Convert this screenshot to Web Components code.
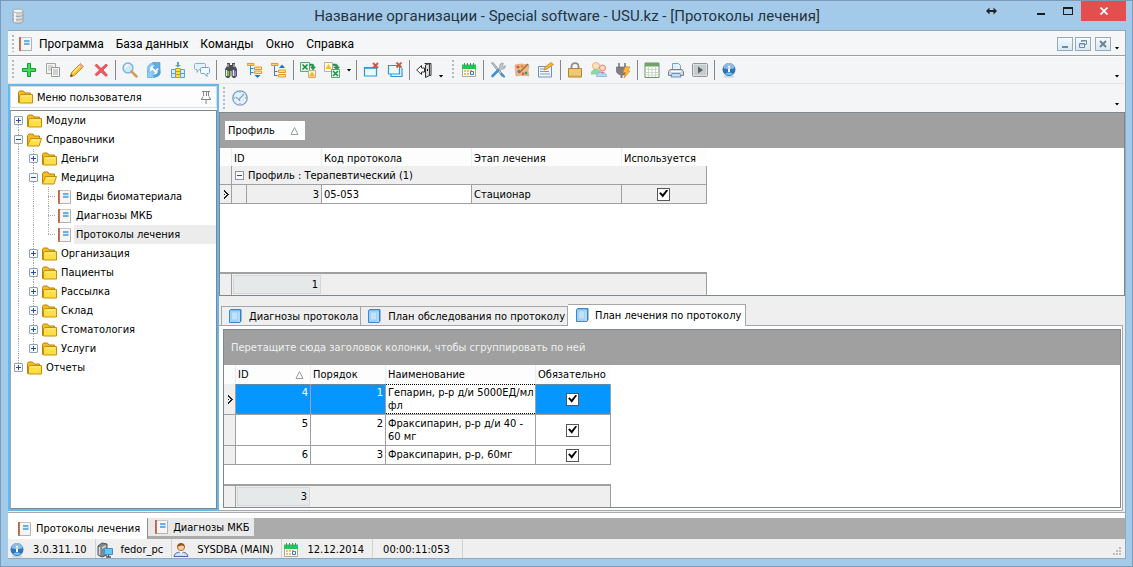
<!DOCTYPE html>
<html lang="ru">
<head>
<meta charset="utf-8">
<title>Протоколы лечения</title>
<style>
html, body { margin: 0; }
body {
  font-family: "DejaVu Sans Condensed", "Noto Sans", sans-serif;
  font-size: 11px;
  line-height: 13px;
  color: #000;
}
</style>
</head>
<body>
<app-window></app-window>
<script>
const ICONS = {
  db: `<path d="M3 3v10c0 3 10 3 10 0V3z" fill="#d9d9d6" stroke="#9aa1a5"/><ellipse cx="8" cy="3" rx="5" ry="2" fill="#f4f4f2" stroke="#a8aeb1"/><path d="M3 6.500c0 2.500 10 2.500 10 0M3 10c0 2.500 10 2.500 10 0" fill="none" stroke="#9aa1a5"/><path d="M5 5v9" stroke="#fff" stroke-width="1.500"/>`,
  page: `<path d="M3.500 1.500h11v13h-11z" fill="#f5f5f5" stroke="#c6c6c6"/><path d="M2 1h2v14H2z" fill="#cf7350"/><path d="M2.500 2v12" stroke="#8d5f4d" stroke-dasharray="1 1"/><path d="M7 4h5.500v5H7z" fill="#6bb0e6"/><path d="M7 6.500h5.500" stroke="#d9ecfb"/><path d="M14.500 2v12.500H4" stroke="#b2b4b6"/>`,
  folder: `<path d="M1.500 3.500l1-1.500h4l1.500 2h5.500v9.500h-12z" fill="#f5bd23" stroke="#bd8305"/><path d="M2.500 13.500V6.500l1.500-1h11.500v8.500h-13z" fill="#ffdf45" stroke="#c98f08"/><path d="M4 7h10" stroke="#fff2a0"/>`,
  open: `<path d="M1.500 13.500v-10L3 2h4l1 2h5.500v3" fill="#f5bd23" stroke="#bd8305"/><path d="M1.500 14L4.500 6.500h11L13 14z" fill="#ffe04a" stroke="#c98f08"/><path d="M5.500 8h8.500" stroke="#fff3a6"/>`,
  plus: `<path d="M6.500 1.500h3v5h5v3h-5v5h-3v-5h-5v-3h5z" fill="#3ddc5c" stroke="#119d38"/>`,
  copy: `<path d="M1.500 1.500h9v10h-9z" fill="#f4f4f2" stroke="#a3a5a2"/><path d="M3 4h5M3 6h3M3 8h3" stroke="#b5b7b4"/><path d="M6.500 5.500h8v9h-8z" fill="#f7f7f5" stroke="#969895"/><path d="M8 8h5M8 10h5M8 12h5" stroke="#a9aba8"/>`,
  pencil: `<path d="M1.500 14.500l1-4 9-9 3 3-9 9z" fill="#fbc02c" stroke="#c78a2c"/><path d="M4 11l8-8" stroke="#ffe98c" stroke-width="1.500"/><path d="M11.500 1.500l3 3-1.500 1.500-3-3z" fill="#f0a794"/><path d="M1 15l1-3 2 2z" fill="#4a4a4a"/>`,
  cross: `<path d="M2 3.500L3.500 2 8 6.500 13 2l1.500 1.500L10 8l4.500 5-1.500 1.500L8 10l-4.500 4L2 12.500 6.500 8z" fill="#f05a5e" stroke="#cf2d35" stroke-width=".6"/>`,
  search: `<circle cx="6" cy="6" r="5" fill="#cfe9fb" stroke="#76b4e4" stroke-width="1.400"/><path d="M3.500 6a3 3 0 0 1 3-3" stroke="#fff" stroke-width="1.500" fill="none"/><path d="M9.500 9.500l5 5" stroke="#d69a58" stroke-width="2.500" stroke-linecap="round"/>`,
  refresh: `<path d="M3 9.500c-2-4 1-8 5-7.500h1" stroke="#86c5f0" stroke-width="3"/><path d="M6.500 .500H14v7l-2.500-2-2 2-2.500-2 2-2z" fill="#5fb0e8" stroke="#3f93d0" stroke-width=".6"/><path d="M13 7.500c1 4-1 6.500-5 6.500H7" stroke="#4ba0dd" stroke-width="3"/><path d="M9 15.500H1.500v-7L4 10.500l2-2 2.500 2-2 2z" fill="#8fcdf4" stroke="#4b9dd6" stroke-width=".6"/>`,
  insert: `<path d="M5.500 6.500h5v9h-5z" fill="#ffd94f" stroke="#d69a12"/><path d="M5.500 9.500h5M5.500 12.500h5" stroke="#d69a12"/><path d="M1.500 7.500h4v8h-4zM10.500 7.500h4v8h-4z" fill="#d8ecf9" stroke="#5ea4cf"/><path d="M1.500 11.500h4M10.500 11.500h4" stroke="#5ea4cf"/><path d="M8 5.500L5 3h2V0h2v3h2z" fill="#5b9fcd"/>`,
  chat: `<path d="M1.500 1.500h9c1 0 1 1 1 1v4c0 1-1 1-1 1H5l-2 3v-3H1.500c-1 0-1-1-1-1v-4c0-1 1-1 1-1z" fill="#e5f2fb" stroke="#7fb3d8"/><path d="M7.500 5.500h7c1 0 1 1 1 1v4c0 1-1 1-1 1H13v3l-2.500-3h-3c-1 0-1-1-1-1v-4c0-1 1-1 1-1z" fill="#f2f8fd" stroke="#6ea5ce"/>`,
  binoc: `<path d="M4 1h3v2h2V1h3v3l2 3v7l-2 2h-2l-1.500-2V9h-1v5L6 16H4l-2-2V7l2-3z" fill="#4c5054"/><path d="M3.500 8v6M10.500 8v6" stroke="#e4e6e8" stroke-width="1.500"/><path d="M5.300 9v5" stroke="#74d02e" stroke-width="1.700"/><path d="M12.300 9v5" stroke="#8f7fd8" stroke-width="1.700"/><path d="M5 2v3M11 2v3" stroke="#d5d8da"/>`,
  treedown: `<path d="M0 1.500h7v2H0z" fill="#ffcf6b" stroke="#e59a27"/><path d="M3.500 4v9M3.500 6.500h3M3.500 10.500h3" stroke="#2d86d0"/><path d="M7.500 5h7v2.500h-7zM7.500 9h7v2.500h-7z" fill="#ffe3a0" stroke="#e59a27"/><path d="M7.500 13h6l-3 3z" fill="#1d72c6"/>`,
  treeup: `<path d="M0 1.500h7v2H0z" fill="#ffcf6b" stroke="#e59a27"/><path d="M3.500 4v10M3.500 9.500h3M3.500 13.500h3" stroke="#2d86d0"/><path d="M7.500 8h7v2.500h-7zM7.500 12.500h7v2.500h-7z" fill="#ffe3a0" stroke="#e59a27"/><path d="M8 6h6l-3-3.500z" fill="#1d72c6"/>`,
  xlsout: `<path d="M.500 .500h9v9h-9z" fill="#e5f6e9" stroke="#56a871"/><path d="M2.500 2.500l5 5M7.500 2.500l-5 5" stroke="#208a47" stroke-width="1.600"/><path d="M10 2h2c2 0 2 1 2 3h1.500L13 8 10.500 5H12c0-1 0-1.500-2-1.500z" fill="#299a52" stroke="#187a3b" stroke-width=".5"/><path d="M8.500 8.500h7v7h-7z" fill="#fff5da" stroke="#c9ad77"/><path d="M12 9.500l3 5H9z" fill="#f3b02b"/>`,
  xlsin: `<path d="M.500 .500h8v9h-8z" fill="#fff8e6" stroke="#b9b2a4"/><path d="M4.500 2l3 5h-6z" fill="#f3c02b"/><path d="M9 2h2c2 0 3 1 3 3h1.500L13 8 9.500 5H12c0-1-1-1.500-3-1.500z" fill="#299a52" stroke="#187a3b" stroke-width=".5"/><path d="M7.500 7.500h8v8h-8z" fill="#e5f6e9" stroke="#56a871"/><path d="M9 9l5 5M14 9l-5 5" stroke="#208a47" stroke-width="1.500"/>`,
  winclose: `<path d="M1.500 5.500h12v8.500h-12z" fill="#eef8fe" stroke="#259bd8" stroke-width="1.200"/><path d="M2 6h11" stroke="#259bd8" stroke-width="1.500"/><path d="M10 1l5 5M15 1l-5 5" stroke="#d1553f" stroke-width="1.800"/>`,
  winsclose: `<path d="M4 12v2.500h11V6" fill="none" stroke="#259bd8" stroke-width="1.200"/><path d="M1.500 3.500h11V12h-11z" fill="#eef8fe" stroke="#259bd8" stroke-width="1.200"/><path d="M9.500 .500l5 5M14.500 .500l-5 5" stroke="#d1553f" stroke-width="1.800"/>`,
  door: `<path d="M8.500 1.500h6.500v12h-6" fill="#fff" stroke="#333"/><path d="M9.500 3l4-1.500v12l-4 2z" fill="#dcdcdc" stroke="#333"/><path d="M5.500 3.500V6h3v4h-3v2.500L.700 8z" fill="#fff" stroke="#333"/><path d="M11.500 7v2" stroke="#111"/>`,
  calendar: `<path d="M1.500 4.500h13v10h-13z" fill="#fdfdf7" stroke="#a9aaa2"/><path d="M1 2.500h14v4.500H1z" fill="#22c45c"/><path d="M3.500 1v3M6.500 1v3M9.500 1v3M12.500 1v3" stroke="#5f8a66"/><path d="M3 8h2v2H3zM6 8h2v2H6zM9 8h2v2H9zM3 11h2v2H3zM6 11h2v2H6z" fill="#f0bf6e"/><path d="M9.500 9.500h3v3h-3z" fill="#fff" stroke="#2c7ecb"/>`,
  tools: `<path d="M1.500 1L3 .500 13.500 13l-1.500 1.500z" fill="#c5cacf" stroke="#7f878e" stroke-width=".7"/><path d="M11 1.500c2-1 3 0 2 1l-1 1.500 1.500 1L15 3.500c1 1.500-.500 4-3 3.500L10 8.500 8.500 7l1.300-2c-.300-1.500.200-2.900 1.200-3.500z" fill="#c3c9ce" stroke="#7f878e" stroke-width=".6"/><path d="M8 8.500L2.500 14" stroke="#3c93d6" stroke-width="2.600" stroke-linecap="round"/><path d="M11.500 12l2.500 2.500" stroke="#3c93d6" stroke-width="2.200" stroke-linecap="round"/>`,
  palette: `<path d="M1 3l6-1 8 1-1 6 1 5-6-1-7 1-.500-6z" fill="#f3b982" stroke="#cf9b76" stroke-width=".6"/><circle cx="4" cy="5" r="1.600" fill="#d9583b"/><circle cx="8" cy="4.500" r="1.400" fill="#e8893a"/><circle cx="5" cy="9.500" r="1.700" fill="#4f85c9"/><circle cx="12" cy="11" r="1.500" fill="#39a267"/><circle cx="9" cy="12" r="1.400" fill="#e2574e"/><path d="M5 11l9-9" stroke="#9b6b46" stroke-width="1.500"/>`,
  note: `<path d="M.500 4.500h13v10.500H.500z" fill="#f2f6fd" stroke="#6d8fc6"/><path d="M2 7h6M2 9.500h9M2 12h10" stroke="#8197bb"/><path d="M6 8l1-3 6-4.500 2.500 2L9 7z" fill="#f7b733" stroke="#c07f25" stroke-width=".7"/>`,
  lock: `<path d="M4.500 8V4.500c0-4.500 7-4.500 7 0V8" fill="none" stroke="#8d8f91" stroke-width="1.800"/><path d="M1.500 6.500h13v8.500h-13z" fill="#e8bd62" stroke="#b08433"/><path d="M2 8h12M2 10h12M2 12h12" stroke="#f6dc98" stroke-width=".8"/>`,
  users: `<circle cx="5" cy="4" r="3.500" fill="#fde3c4" stroke="#eeb06e"/><path d="M0 12c0-6 10-6 10 0z" fill="#8fdba8" stroke="#6bbf86" stroke-width=".6"/><circle cx="11.500" cy="6" r="3" fill="#fbd9c4" stroke="#ef8273"/><path d="M5.500 14.500c0-6 10-6 10 0z" fill="#b4d6fa" stroke="#6a9fdd" stroke-width=".6"/><path d="M9.500 10l2 2 2-2" fill="#e9776f"/>`,
  plug: `<path d="M4 1v4M10 1v4" stroke="#88898b" stroke-width="1.800"/><path d="M1.500 5h11v4c0 3-3 4-5 4s-6-1-6-4z" fill="#7d7f82" stroke="#5c5e61" stroke-width=".6"/><path d="M6.500 13v3" stroke="#77797c" stroke-width="2"/><path d="M10 5h5l-2.500 4H15l-6 7 1.500-5.500H8z" fill="#ffc033" stroke="#de7d1f" stroke-width=".7"/>`,
  table: `<path d="M1 1h14v14.500H1z" fill="#fff" stroke="#6c8c6b"/><path d="M1 1h14v3.500H1z" fill="#6ca567"/><path d="M1 7.500h14M1 10.500h14M1 13h14M4.500 5v10M8 5v10M11.500 5v10" stroke="#c0d1bf" stroke-width=".8"/>`,
  printer: `<path d="M4.500 1.500h6l2 2V8h-8z" fill="#e6f1fb" stroke="#6fa2d0"/><path d="M2 7.500h12l1.500 2v4H.500v-4z" fill="#d4d7da" stroke="#7d8287"/><path d="M4 11.500h8l1 3.500H3z" fill="#c7e1f8" stroke="#6793bb"/><path d="M3 9.500h10" stroke="#fff"/>`,
  play: `<rect x=".500" y="1.500" width="15" height="13" rx="1" fill="#dfe2e3" stroke="#8f9598"/><path d="M2 3h12v10H2z" fill="#c6cccd"/><path d="M6 4.500v7L11 8z" fill="#59605f"/>`,
  info: `<ellipse cx="8" cy="14.500" rx="5.500" ry="1.200" fill="#cfd4d8"/><circle cx="8" cy="7.500" r="6.500" fill="#2f74bb"/><path d="M2.500 6a5.500 5 0 0 1 11 0c-2.500 1.500-8.500 1.500-11 0z" fill="#8fbce6"/><path d="M4 11.500a5 4 0 0 0 8 0c-3-1.500-5-1.500-8 0z" fill="#74c6f4"/><path d="M8 4v1.600M8 6.600v3.400" stroke="#fff" stroke-width="2"/>`,
  clock: `<circle cx="8" cy="8" r="7.200" fill="#e3f1fb" stroke="#7d9dbf" stroke-width="1.300"/><path d="M3.500 7L7 9.500l5-5.500" fill="none" stroke="#7fa9d3" stroke-width="1.300"/><path d="M8 2v1M8 13v1M2 8h1M13 8h1" stroke="#6d97c4"/><path d="M7 9.500l1 1.500" stroke="#d35b4a"/>`,
  book: `<path d="M2.500 2.500l1.500-1h10v11.500l-1 1.500H2.500z" fill="#7fbcec" stroke="#3f86c4"/><path d="M3 3h8.500v11H3z" fill="#9fd0f5"/><path d="M5 4.500h5v7H5z" fill="#c3e2fa"/><path d="M12 3.500v10.500" stroke="#e8f3fb"/><path d="M13.500 2.500v10.500" stroke="#3a7fbc"/>`,
  pin: `<path d="M4 2.500h8M5.500 3v4M10.500 3v4M3 10.500h10M5 7.500L3.500 10M11 7.500l1.500 2.500M8 11v4M8.500 3v4" stroke="#80858a" fill="none"/>`,
  server: `<path d="M1 4l4-3 5 1v11l-5 2-4-2z" fill="#7f878c" stroke="#4f565a"/><path d="M2.500 5v8M5 6l4-2" stroke="#d3d8db" fill="none" stroke-width="1.500"/><path d="M7.500 6.500h8v6h-8z" fill="#5cc9f7" stroke="#4b8fbe"/><path d="M11.500 13v2M9 15h5" stroke="#51595e" stroke-width="1.500"/>`,
  user: `<path d="M1 14.500c0-6 14-6 14 0z" fill="#d3e0f6" stroke="#4a67a8"/><path d="M6 9l2 3 2.500-3z" fill="#fff"/><circle cx="8" cy="5" r="3.600" fill="#fbd0a0" stroke="#b96d2a"/><path d="M4.500 5C4 0 12 0 11.500 5 10 3 7 3 4.500 5z" fill="#8f521d"/>`
};

const define = (tag, css, html, setup) => {
  const tpl = document.createElement('template');
  tpl.innerHTML = `<style>:host,*{box-sizing:border-box}${css}</style>${html}`;
  customElements.define(tag, class extends HTMLElement {
    constructor() {
      super();
      this.attachShadow({ mode: 'open' }).append(tpl.content.cloneNode(true));
    }
    connectedCallback() { if (setup) setup.call(this, this.shadowRoot); }
  });
};

/* ---- small parts ---- */
define('ui-icon', `:host{display:block;flex:none;width:16px;height:16px}svg{display:block;width:100%;height:100%}`,
  `<svg viewBox="0 0 16 16" fill="none" aria-hidden="true"></svg>`,
  function (r) { r.querySelector('svg').innerHTML = ICONS[this.getAttribute('name')] || ''; });

define('bar-grip', `:host{display:block;flex:none;width:2px;align-self:stretch;margin:3px 3px 3px 4px;
  background:repeating-linear-gradient(#b7bac0 0 2px,transparent 2px 4px)}`, '');

define('bar-sep', `:host{display:block;flex:none;width:1px;height:20px;margin:0 2px;background:#85878a}`, '');

define('drop-arrow', `:host{display:block;flex:none;width:10px}
  :host([low]){padding-top:12px}
  button{display:block;width:10px;height:8px;padding:0;border:0;background:none}
  button::before{content:"";display:block;width:5px;height:3px;margin:0 auto;background:#000;clip-path:polygon(0 0,100% 0,50% 100%)}`,
  `<button type="button" aria-label="Ещё"></button>`);

define('tool-button', `:host{display:block;flex:none}
  button{display:grid;place-items:center;width:24px;height:24px;padding:0;border:0;background:none}`,
  `<button type="button"></button>`,
  function (r) {
    const b = r.querySelector('button');
    b.innerHTML = `<ui-icon name="${this.getAttribute('icon')}"></ui-icon>`;
    b.setAttribute('aria-label', this.getAttribute('label') || this.getAttribute('icon'));
  });

/* ---- title bar ---- */
define('title-bar', `:host{display:grid;grid-template-columns:1fr auto 1fr;height:29px;align-items:center}
  .ico{padding-left:2px}
  h1{margin:0;font:15px/20px Roboto,"Noto Sans",sans-serif;color:#26343f;white-space:nowrap}
  .btns{display:flex;justify-content:flex-end;align-self:start}
  button{display:grid;place-items:center;width:27px;height:20px;padding:0;border:0;background:none}
  .move{margin-right:22px}
  .close{width:45px;background:#e54e4e}
  svg{display:block}`,
  `<span class="ico"><ui-icon name="db"></ui-icon></span>
  <h1>Название организации - Special software - USU.kz - [Протоколы лечения]</h1>
  <div class="btns">
    <button class="move" type="button" aria-label="Переместить"><svg width="11" height="8"><path d="M0 4l3.500-3.500V3h4V.500L11 4 7.500 7.500V5h-4v2.500z" fill="#222"/></svg></button>
    <button type="button" aria-label="Свернуть"><svg width="10" height="8"><path d="M1 6h8v2H1z" fill="#1c1c1c"/></svg></button>
    <button type="button" aria-label="Развернуть"><svg width="10" height="8"><path d="M0 0h10v8H0zM1 2v5h8V2z" fill="#1c1c1c" fill-rule="evenodd"/></svg></button>
    <button class="close" type="button" aria-label="Закрыть"><svg width="8" height="8"><path d="M.500 .500l7 7M7.500 .500l-7 7" stroke="#fff" stroke-width="1.800"/></svg></button>
  </div>`);

/* ---- menu ---- */
define('menu-bar', `:host{display:flex;align-items:center;height:25px;padding:1px 3px 0 0;background:#f5f6f7;border-bottom:1px solid #9a9da1}
  nav{display:flex;gap:12px;flex:1;margin-left:6px}
  nav button{padding:0;border:0;background:none;font:12px/16px Roboto,"Noto Sans",sans-serif;color:#000}
  .mdi{display:flex;gap:2px}
  .mdi button{display:grid;place-items:center;width:16px;height:14px;padding:0;border:1px solid #98a9b8;background:linear-gradient(#f4f9fd,#d8e8f4)}
  .mdi button:last-child{margin-left:2px}
  svg{display:block}
  drop-arrow{align-self:stretch;margin-left:1px}`,
  `<bar-grip></bar-grip><ui-icon name="page"></ui-icon>
  <nav aria-label="Главное меню"><button>Программа</button><button>База данных</button><button>Команды</button><button>Окно</button><button>Справка</button></nav>
  <div class="mdi">
    <button aria-label="Свернуть окно"><svg width="8" height="8"><path d="M1 6h6v2H1z" fill="#6f8ba3"/></svg></button>
    <button aria-label="Восстановить окно"><svg width="8" height="8"><path d="M2.500 2V.500h5v4H6M2.500 1h5M.500 3.500h5v4h-5zM.500 4h5" fill="none" stroke="#6f8ba3"/></svg></button>
    <button aria-label="Закрыть окно"><svg width="8" height="8"><path d="M1 1l6 6M7 1L1 7" stroke="#6d8292" stroke-width="2"/></svg></button>
  </div><drop-arrow low></drop-arrow>`);

/* ---- main toolbar ---- */
define('tool-bar', `:host{display:flex;align-items:center;height:28px;padding:0 3px 0 0;background:#f4f5f7;border-top:1px solid #fdfdfd;border-bottom:1px solid #e2e4e7}
  .fill{flex:1}
  .g{margin-right:2px}`,
  `<bar-grip></bar-grip>` +
  'plus copy pencil cross | search refresh insert chat | binoc treedown treeup | xlsout xlsin v | winclose winsclose | door w # calendar | tools palette note | lock users plug | table printer play | info'
    .split(' ').map(n => n === '|' ? '<bar-sep></bar-sep>' : n === 'v' ? '<drop-arrow></drop-arrow>' : n === 'w' ? '<drop-arrow low></drop-arrow><span class="g"></span>' :
      n === '#' ? '<bar-grip></bar-grip>' : `<tool-button icon="${n}"></tool-button>`).join('') +
  `<span class="fill"></span><drop-arrow low></drop-arrow>`);

/* ---- user menu tree ---- */
define('tree-row', `:host{display:flex;align-items:center;height:19px}
  .c{flex:none;width:15px;height:19px;display:grid;place-items:center;
     background:repeating-linear-gradient(#a6a6a6 0 1px,transparent 1px 2px) 7px 0/1px 100% no-repeat}
  .c.first{background-position:7px 10px}
  .c.last{background-size:1px 9px}
  .c.h{background:repeating-linear-gradient(#a6a6a6 0 1px,transparent 1px 2px) 7px 0/1px 100% no-repeat,
     repeating-linear-gradient(90deg,#a6a6a6 0 1px,transparent 1px 2px) 7px 9px/8px 1px no-repeat}
  .c.h.last{background-size:1px 9px,8px 1px}
  button{width:9px;height:9px;padding:0;border:1px solid #8fa3b8;border-radius:1px;
    background:linear-gradient(#2f4f87,#2f4f87) 1px 3px/5px 1px no-repeat,#f5f7f9}
  button.plus{background:linear-gradient(#2f4f87,#2f4f87) 1px 3px/5px 1px no-repeat,linear-gradient(#2f4f87,#2f4f87) 3px 1px/1px 5px no-repeat,#f5f7f9}
  span.t{flex:1;margin-left:2px;padding-left:2px;line-height:19px;white-space:nowrap}
  :host([selected]) span.t{background:#ececec}`,
  `<span class="t"><slot></slot></span>`,
  function (r) {
    const t = r.querySelector('.t');
    const cells = this.getAttribute('cells').split('').map(k => ({
      l: '<i class="c"></i>',
      f: '<i class="c first"><button class="plus" aria-label="Развернуть"></button></i>',
      p: '<i class="c"><button class="plus" aria-label="Развернуть"></button></i>',
      P: '<i class="c last"><button class="plus" aria-label="Развернуть"></button></i>',
      m: '<i class="c"><button aria-label="Свернуть"></button></i>',
      h: '<i class="c h"></i>', H: '<i class="c h last"></i>'
    })[k]).join('');
    t.insertAdjacentHTML('beforebegin', cells + `<ui-icon name="${this.getAttribute('icon')}"></ui-icon>`);
  });

define('user-menu', `:host{display:flex;flex-direction:column;width:211px;flex:none;border:2px solid #66b7ea;background:#fff}
  header{display:flex;align-items:center;height:22px;margin-bottom:2px;padding:0 2px 0 6px;border:1px solid #dcdfe2;background:#fdfdfd}
  h2{margin:0 0 0 4px;flex:1;font:inherit}
  .tree{flex:1;border:1px solid #7f8790;border-left-color:#a0a6ac;background:#fff}`,
  `<header><ui-icon name="folder"></ui-icon><h2>Меню пользователя</h2><ui-icon name="pin"></ui-icon></header>
  <div class="tree">
    <tree-row cells="f" icon="folder">Модули</tree-row>
    <tree-row cells="m" icon="open">Справочники</tree-row>
    <tree-row cells="lp" icon="folder">Деньги</tree-row>
    <tree-row cells="lm" icon="open">Медицина</tree-row>
    <tree-row cells="llh" icon="page">Виды биоматериала</tree-row>
    <tree-row cells="llh" icon="page">Диагнозы МКБ</tree-row>
    <tree-row cells="llH" icon="page" selected>Протоколы лечения</tree-row>
    <tree-row cells="lp" icon="folder">Организация</tree-row>
    <tree-row cells="lp" icon="folder">Пациенты</tree-row>
    <tree-row cells="lp" icon="folder">Рассылка</tree-row>
    <tree-row cells="lp" icon="folder">Склад</tree-row>
    <tree-row cells="lp" icon="folder">Стоматология</tree-row>
    <tree-row cells="lP" icon="folder">Услуги</tree-row>
    <tree-row cells="P" icon="folder">Отчеты</tree-row>
  </div>`);

/* ---- data grids ---- */
const GRID_CSS = `
  :host{display:flex;flex-direction:column;border:1px solid #7f8790;background:#fff}
  .band{display:flex;align-items:center;flex:none;height:35px;background:#a0a0a0}
  table{border-collapse:separate;border-spacing:0;table-layout:fixed;flex:none}
  th,td{padding:0 2px;height:19px;font-weight:normal;text-align:left;white-space:nowrap;overflow:hidden}
  th{background:#fdfdfd;border-right:1px solid #e6eef6}
  th:last-child{border-right-color:#fdfdfd}
  td{border-right:1px solid #a0a0a0;border-bottom:1px solid #a0a0a0}
  td.n{text-align:right;padding-right:2px}
  td.ind,td.g{background:#efefef}
  td.ind{padding:0}
  td.chk{text-align:center;padding:0 1px 0 0}
  td svg{margin:0 auto}
  input{appearance:none;display:block;width:13px;height:13px;margin:0 auto;border:1px solid #555;background:#fff}
  input::before{content:"";display:block;width:9px;height:8px;margin:1px;background:#000;clip-path:polygon(0 45%,20% 35%,40% 60%,85% 0,100% 12%,42% 100%)}
  .fill{flex:1}
  .foot td{height:23px;background:#efefef;border-top:2px solid #a0a0a0;border-bottom:0}
  .foot td.sum{border-right:0;padding:1px}
  .sum span{display:block;height:19px;line-height:18px;border:1px solid #d5d8da;background:#e6e9ea;text-align:right;padding-right:2px}
  svg{display:block}
`;
const TRI = `<svg width="9" height="8" aria-hidden="true"><path d="M4.500 .500l3.500 7h-7z" fill="none" stroke="#9aa0a0"/></svg>`;
const MARK = `<svg width="6" height="9" aria-hidden="true"><path d="M1 0h1v1h1v1h1v1h1v1h1v1h-1v1h-1v1h-1v1h-1v1h-1V7h1V6h1V5h1V4h-1V3h-1V2h-1z" fill="#222"/><path d="M1 4h1v1h-1z" fill="#222"/></svg>`;

define('protocol-grid', GRID_CSS + `
  .chip{display:flex;align-items:center;justify-content:space-between;width:80px;height:19px;margin-left:5px;padding:0 6px 0 3px;border:0;background:#fdfdfd;font:inherit;color:#000}
  table{width:487px}
  thead th{height:18px}
  th{padding-top:2px}
  td.w{background:#fff}
  tr.grp div{display:flex;align-items:center;gap:4px;padding-left:1px}
  tr.grp button{width:9px;height:9px;padding:0;border:1px solid #8b93a0;background:linear-gradient(#34507f,#34507f) 1px 3px/5px 1px no-repeat,#fafafa}`,
  `<div class="band"><button class="chip" type="button">Профиль ${TRI}</button></div>
  <table>
    <colgroup><col style="width:12px"><col style="width:15px"><col style="width:75px"><col style="width:150px"><col style="width:150px"><col style="width:85px"></colgroup>
    <thead><tr><th></th><th colspan="2">ID</th><th>Код протокола</th><th>Этап лечения</th><th>Используется</th></tr></thead>
    <tbody>
      <tr class="grp"><td class="ind"></td><td class="g" colspan="5"><div><button type="button" aria-label="Свернуть группу"></button>Профиль : Терапевтический (1)</div></td></tr>
      <tr><td class="ind">${MARK}</td><td class="g"></td><td class="g n">3</td><td class="w">05-053</td><td class="g">Стационар</td><td class="g chk"><input type="checkbox" checked aria-label="Используется"></td></tr>
    </tbody>
  </table>
  <div class="fill"></div>
  <table class="foot">
    <colgroup><col style="width:12px"><col style="width:90px"><col style="width:385px"></colgroup>
    <tbody><tr><td class="ind"></td><td class="sum"><span>1</span></td><td></td></tr></tbody>
  </table>`);

define('plan-grid', GRID_CSS + `
  .band{padding-left:7px;color:#f0f0f0}
  table{width:387px}
  th div{display:flex;align-items:center;justify-content:space-between;padding-right:4px}
  td{line-height:13px;vertical-align:top;padding-top:2px}
  td.ind,td.chk{vertical-align:middle;padding-top:0}
  td.wrap{white-space:normal;padding-right:0}
  tr.two td{height:31px}
  tr.sel td.n,tr.sel td.chk{color:#fff;background:
    repeating-linear-gradient(90deg,#c9793f 0 1px,transparent 1px 2px) 0 0/100% 1px no-repeat,
    repeating-linear-gradient(90deg,#c9793f 0 1px,transparent 1px 2px) 0 100%/100% 1px no-repeat,#0596ff}
  tr.sel td.wrap{background:
    repeating-linear-gradient(90deg,#000 0 1px,transparent 1px 2px) 0 0/100% 1px no-repeat,
    repeating-linear-gradient(90deg,#000 0 1px,transparent 1px 2px) 0 100%/100% 1px no-repeat,
    #fff}
  .foot td{padding-top:0}`,
  `<div class="band">Перетащите сюда заголовок колонки, чтобы сгруппировать по ней</div>
  <table>
    <colgroup><col style="width:12px"><col style="width:75px"><col style="width:75px"><col style="width:150px"><col style="width:75px"></colgroup>
    <thead><tr><th></th><th><div>ID ${TRI}</div></th><th>Порядок</th><th>Наименование</th><th>Обязательно</th></tr></thead>
    <tbody>
      <tr class="two sel"><td class="ind">${MARK}</td><td class="n">4</td><td class="n">1</td><td class="wrap">Гепарин, р-р д/и 5000ЕД/мл фл</td><td class="chk"><input type="checkbox" checked aria-label="Обязательно, 4"></td></tr>
      <tr class="two"><td class="ind"></td><td class="n">5</td><td class="n">2</td><td class="wrap">Фраксипарин, р-р д/и 40 - 60 мг</td><td class="chk"><input type="checkbox" checked aria-label="Обязательно, 5"></td></tr>
      <tr><td class="ind"></td><td class="n">6</td><td class="n">3</td><td>Фраксипарин, р-р, 60мг</td><td class="chk"><input type="checkbox" checked aria-label="Обязательно, 6"></td></tr>
    </tbody>
  </table>
  <div class="fill"></div>
  <table class="foot">
    <colgroup><col style="width:12px"><col style="width:75px"><col style="width:300px"></colgroup>
    <tbody><tr><td class="ind"></td><td class="sum"><span>3</span></td><td></td></tr></tbody>
  </table>`);

/* ---- detail tabs with page ---- */
define('detail-tabs', `:host{display:flex;flex-direction:column}
  .tabs{display:flex;align-items:flex-end;flex:none;height:21px;padding-left:2px}
  button{display:flex;align-items:center;height:19px;padding:0 2px 0 5px;gap:6px;border:1px solid #a4a6a9;border-bottom:0;background:#efefef;font:inherit;color:#000;white-space:nowrap}
  button + button{border-left:0}
  button[aria-selected=true]{height:22px;margin-bottom:-1px;padding:0 4px 1px 6px;gap:5px;background:#fff;z-index:1}
  .page{flex:1;display:flex;flex-direction:column;margin-right:2px;padding:3px 1px 2px 4px;border:1px solid #a4a6a9;border-left:0;background:#fff}
  ::slotted(*){flex:1}`,
  `<div class="tabs" role="tablist">
    <button role="tab"><ui-icon name="book"></ui-icon>Диагнозы протокола</button>
    <button role="tab"><ui-icon name="book"></ui-icon>План обследования по протоколу</button>
    <button role="tab" aria-selected="true"><ui-icon name="book"></ui-icon>План лечения по протоколу</button>
  </div>
  <div class="page"><slot></slot></div>`);

/* ---- document tabs ---- */
define('document-tabs', `:host{display:block;flex:none;padding-top:5px;background:#fff;border-top:1px solid #a8abae}
  .bar{display:flex;height:21px;background:#ababab}
  button{display:flex;align-items:center;gap:4px;height:18px;padding:0 4px 0 5px;border:0;background:#e9e9e9;font:inherit;color:#000;white-space:nowrap}
  button[aria-selected=true]{height:21px;padding:0 7px 0 8px;background:#fff;border-right:1px solid #8c8c8c}`,
  `<div class="bar" role="tablist">
    <button role="tab" aria-selected="true"><ui-icon name="page"></ui-icon>Протоколы лечения</button>
    <button role="tab"><ui-icon name="page"></ui-icon>Диагнозы МКБ</button>
  </div>`);

/* ---- status bar ---- */
define('status-bar', `:host{display:flex;align-items:center;flex:none;height:19px;background:#efefef}
  span{display:flex;align-items:center;gap:8px;height:19px;padding:2px 8px 0 1px;border-right:1px solid #d3d3d3;white-space:nowrap}
  span.last{padding:2px 12px 0 10px}
  svg{margin-left:auto;align-self:flex-end}`,
  `<span><ui-icon name="info"></ui-icon>3.0.311.10</span>
  <span><ui-icon name="server"></ui-icon>fedor_pc</span>
  <span><ui-icon name="user"></ui-icon>SYSDBA (MAIN)</span>
  <span><ui-icon name="calendar"></ui-icon>12.12.2014</span>
  <span class="last">00:00:11:053</span>
  <svg width="12" height="12" aria-hidden="true"><path d="M6 1h2v2H6zM3 4h2v2H3zM6 4h2v2H6zM0 7h2v2H0zM3 7h2v2H3zM6 7h2v2H6z" fill="#bdbdbd"/></svg>`);

/* ---- whole window ---- */
define('app-window', `:host{display:flex;flex-direction:column;min-height:100vh;padding:0 6px 7px 7px;border:1px solid #7d9bb8;background:#a4cae9}
  .client{flex:1;display:flex;flex-direction:column;border:1px solid #8fa9c0;border-left:0;background:#efefef}
  .main{flex:1;display:flex}
  .work{flex:1;min-width:0;display:flex;flex-direction:column}
  .nav{display:flex;align-items:center;flex:none;height:28px;padding:0 3px 0 0;background:#f4f5f7}
  .nav drop-arrow{margin-left:auto}
  protocol-grid{flex:8 0 0}
  detail-tabs{flex:9 0 2px;margin-top:8px}
  document-tabs{margin-top:1px}`,
  `<title-bar></title-bar>
  <div class="client">
    <menu-bar></menu-bar>
    <tool-bar></tool-bar>
    <div class="main">
      <user-menu></user-menu>
      <div class="work">
        <div class="nav"><bar-grip></bar-grip><tool-button icon="clock" label="История"></tool-button><drop-arrow low></drop-arrow></div>
        <protocol-grid></protocol-grid>
        <detail-tabs><plan-grid></plan-grid></detail-tabs>
      </div>
    </div>
    <document-tabs></document-tabs>
    <status-bar></status-bar>
  </div>`);
</script>
</body>
</html>
